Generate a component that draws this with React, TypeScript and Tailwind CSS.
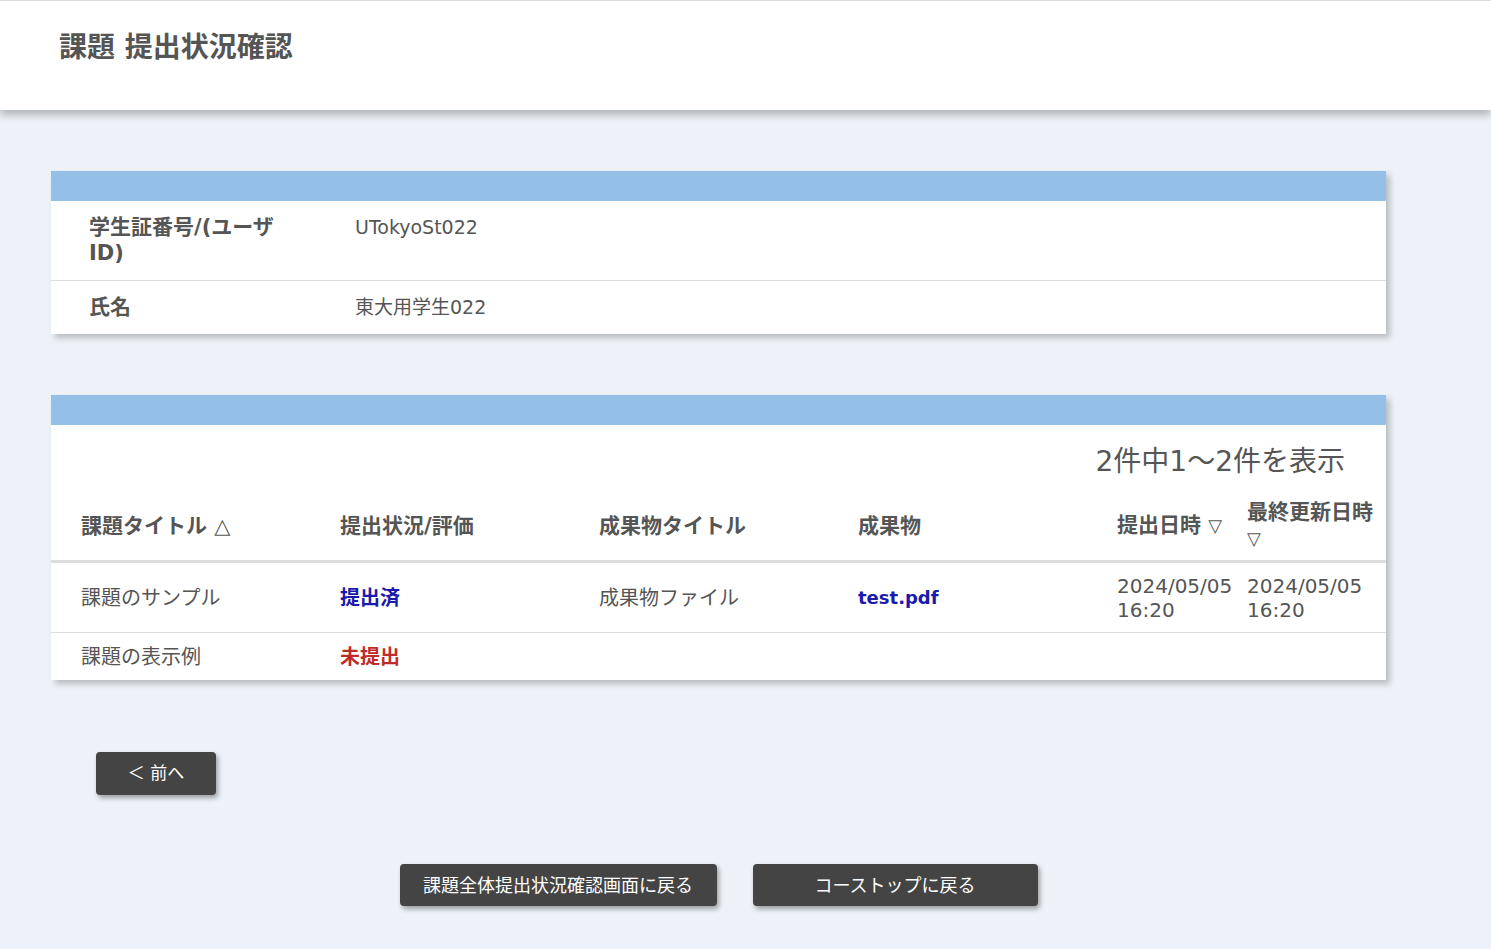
import React from 'react';

const font = "font-['DejaVu_Sans','Noto_Sans_CJK_JP',sans-serif]";

const rows = [
  {
    title: '課題のサンプル',
    status: '提出済',
    statusColor: 'text-[#1a1aad]',
    fileTitle: '成果物ファイル',
    file: 'test.pdf',
    submitted: ['2024/05/05', '16:20'],
    updated: ['2024/05/05', '16:20'],
  },
  {
    title: '課題の表示例',
    status: '未提出',
    statusColor: 'text-[#bf2b2b]',
    fileTitle: '',
    file: '',
    submitted: [] as string[],
    updated: [] as string[],
  },
];

const cols = 'grid grid-cols-[259px_259px_259px_259px_130px_1fr]';

function DateCell({ lines }: { lines: string[] }) {
  return (
    <div className="pl-[30px] text-[20px] leading-[24px] whitespace-nowrap">
      {lines.map((l, i) => (
        <div key={i}>{l}</div>
      ))}
    </div>
  );
}

export default function App() {
  return (
    <div className={`min-h-[949px] bg-[#edf2f8] text-[#555] ${font}`}>
      <header className="h-[110px] bg-white border-t border-[#dcdcdc] shadow-[0_5px_8px_rgba(0,0,0,0.25)] pl-[59px] pt-[28px]">
        <h1 className="text-[28px] font-bold leading-[38px] text-[#555]">課題 提出状況確認</h1>
      </header>

      <main className="ml-[51px] w-[1335px] pt-[61px]">
        <section className="bg-white shadow-[4px_4px_6px_rgba(0,0,0,0.22)]">
          <div className="h-[30px] bg-[#94c0e7]" />
          <div className="flex border-b border-[#dcdcdc] h-[80px] pt-[13px]">
            <div className="w-[304px] pl-[38px] pr-[62px] text-[21px] font-bold leading-[26px]">
              学生証番号/(ユーザID)
            </div>
            <div className="text-[19px] leading-[26px]">UTokyoSt022</div>
          </div>
          <div className="flex items-center h-[53px]">
            <div className="w-[304px] pl-[38px] text-[21px] font-bold">氏名</div>
            <div className="text-[19px]">東大用学生022</div>
          </div>
        </section>

        <section className="mt-[61px] bg-white shadow-[4px_4px_6px_rgba(0,0,0,0.22)]">
          <div className="h-[30px] bg-[#94c0e7]" />
          <div className="flex justify-end pr-[41px] pt-[17px] text-[28px] leading-[40px]">
            2件中1〜2件を表示
          </div>
          <div className={`${cols} items-center h-[72px] mt-[9px] border-b-[3px] border-[#dddddd] text-[21px] font-bold leading-[26px]`}>
            <div className="pl-[30px]">
              課題タイトル <span className="font-normal">△</span>
            </div>
            <div className="pl-[30px]">提出状況/評価</div>
            <div className="pl-[30px]">成果物タイトル</div>
            <div className="pl-[30px]">成果物</div>
            <div className="pl-[30px] whitespace-nowrap">
              提出日時 <span className="font-normal text-[18px]">▽</span>
            </div>
            <div className="pl-[30px] pr-[10px]">
              最終更新日時 <span className="font-normal text-[18px]">▽</span>
            </div>
          </div>
          {rows.map((r, i) => (
            <div
              key={i}
              className={`${cols} items-center text-[20px] ${i === 0 ? 'h-[70px] border-b border-[#dcdcdc]' : 'h-[47px]'}`}
            >
              <div className="pl-[30px]">{r.title}</div>
              <div className={`pl-[30px] font-bold ${r.statusColor}`}>{r.status}</div>
              <div className="pl-[30px]">{r.fileTitle}</div>
              <div className="pl-[30px] font-bold text-[#1a1aad] text-[18px]">{r.file}</div>
              <DateCell lines={r.submitted} />
              <DateCell lines={r.updated} />
            </div>
          ))}
        </section>

        <div className="mt-[72px] pl-[45px]">
          <button className="w-[120px] h-[43px] rounded-[4px] bg-[#444] text-white text-[17px] shadow-[2px_3px_5px_rgba(0,0,0,0.35)]">
            ＜ 前へ
          </button>
        </div>

        <div className="mt-[69px] flex justify-center gap-[36px]">
          <button className="w-[317px] h-[42px] rounded-[4px] bg-[#444] text-white text-[18px] shadow-[2px_3px_5px_rgba(0,0,0,0.35)]">
            課題全体提出状況確認画面に戻る
          </button>
          <button className="w-[285px] h-[42px] rounded-[4px] bg-[#444] text-white text-[18px] shadow-[2px_3px_5px_rgba(0,0,0,0.35)]">
            コーストップに戻る
          </button>
        </div>
      </main>
    </div>
  );
}
